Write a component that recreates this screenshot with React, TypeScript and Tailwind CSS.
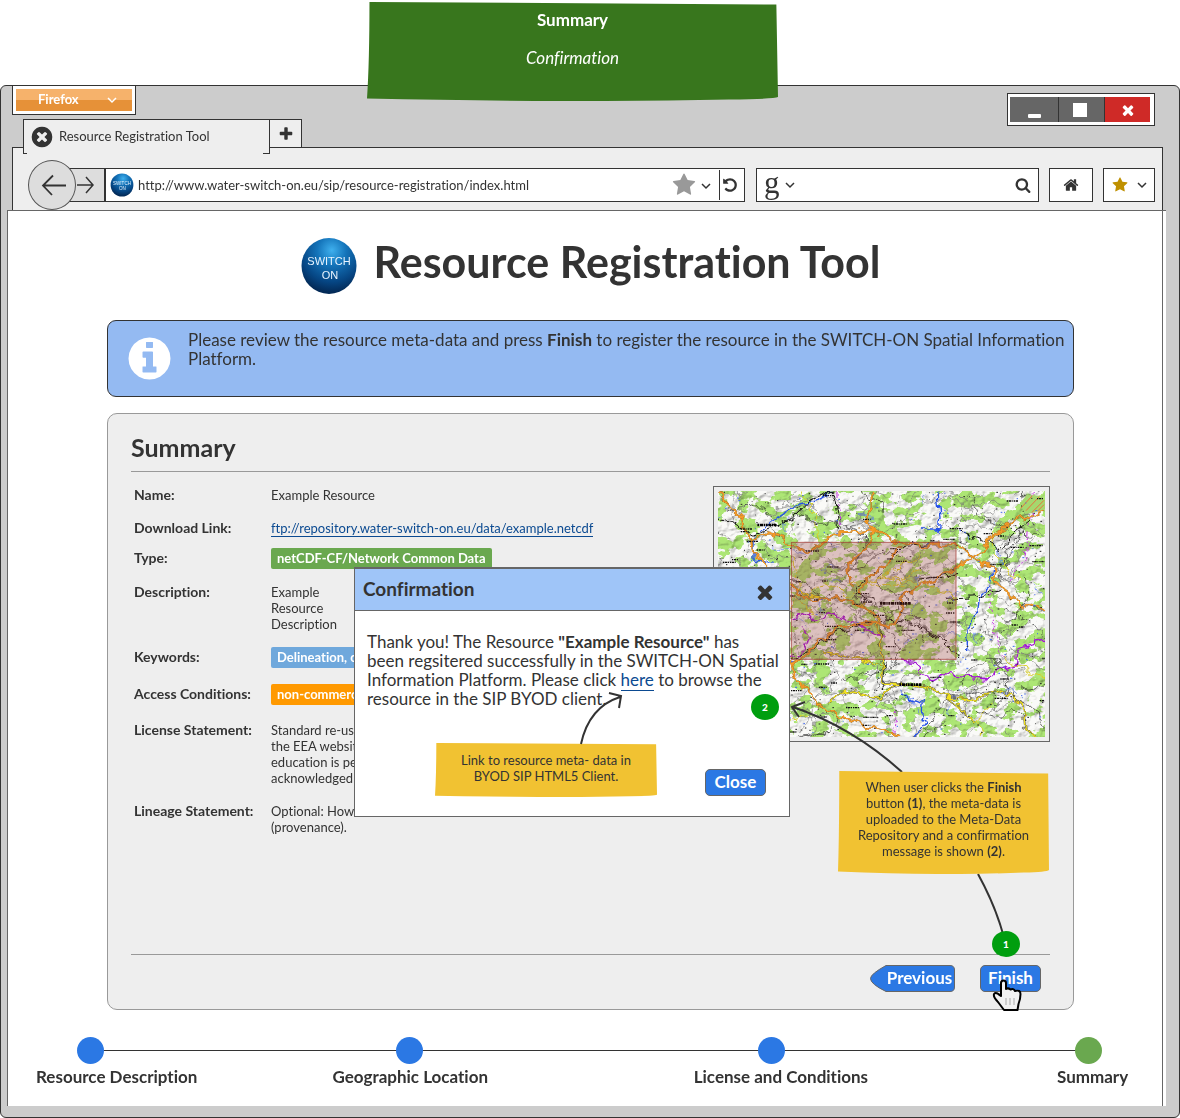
import React from "react";

const ICONS = {
  times:
    "M1490 1322q0 40-28 68l-136 136q-28 28-68 28t-68-28l-294-294-294 294q-28 28-68 28t-68-28l-136-136q-28-28-28-68t28-68l294-294-294-294q-28-28-28-68t28-68l136-136q28-28 68-28t68 28l294 294 294-294q28-28 68-28t68 28l136 136q28 28 28 68t-28 68l-294 294 294 294q28 28 28 68z",
  plus: "M1600 736v192q0 40-28 68t-68 28h-416v416q0 40-28 68t-68 28h-192q-40 0-68-28t-28-68v-416h-416q-40 0-68-28t-28-68v-192q0-40 28-68t68-28h416v-416q0-40 28-68t68-28h192q40 0 68 28t28 68v416h416q40 0 68 28t28 68z",
  star: "M1728 647q0 22-26 48l-363 354 86 500q1 7 1 20 0 21-10.500 35.500t-30.500 14.500q-19 0-40-12l-449-236-449 236q-22 12-40 12-21 0-31.500-14.500t-10.500-35.500q0-6 2-20l86-500-364-354q-25-27-25-48 0-37 56-46l502-73 225-455q19-41 49-41t49 41l225 455 502 73q56 9 56 46z",
  search:
    "M1216 832q0-185-131.500-316.500t-316.500-131.500-316.500 131.500-131.500 316.500 131.500 316.500 316.500 131.500 316.500-131.500 131.500-316.500zm512 832q0 52-38 90t-90 38q-54 0-90-38l-343-342q-179 124-399 124-143 0-273.500-55.500t-225-150-150-225-55.500-273.500 55.500-273.500 150-225 225-150 273.500-55.500 273.500 55.500 225 150 150 225 55.500 273.500q0 220-124 399l343 343q37 37 37 90z",
  home: "M1472 992v480q0 26-19 45t-45 19h-384v-384h-256v384h-384q-26 0-45-19t-19-45v-480q0-1 .5-3t.5-3l575-474 575 474q1 2 1 6zm223-69l-62 74q-8 9-21 11h-3q-13 0-21-7l-692-577-692 577q-12 8-24 7-13-2-21-11l-62-74q-8-10-7-23.500t11-21.500l719-599q32-26 76-26t76 26l244 204v-195q0-14 9-23t23-9h192q14 0 23 9t9 23v408l219 182q10 8 11 21.500t-7 23.500z",
  undo: "M1664 896q0 156-61 298t-164 245-245 164-298 61q-172 0-327-72.500t-264-204.500q-7-10-6.500-22.500t8.500-20.500l137-138q10-9 25-9 16 2 23 12 73 95 179 147t225 52q104 0 198.500-40.500t163.500-109.500 109.500-163.500 40.500-198.500-40.500-198.500-109.500-163.500-163.500-109.500-198.500-40.500q-98 0-188 35.500t-160 101.500l137 138q31 30 14 69-17 40-59 40h-448q-26 0-45-19t-19-45v-448q0-42 40-59 39-17 69 14l130 129q107-101 244.500-156.500t284.500-55.500q156 0 298 61t245 164 164 245 61 298z",
  info: "M1152 1376v-160q0-14-9-23t-23-9h-96v-512q0-14-9-23t-23-9h-320q-14 0-23 9t-9 23v160q0 14 9 23t23 9h96v320h-96q-14 0-23 9t-9 23v160q0 14 9 23t23 9h448q14 0 23-9t9-23zm-128-896v-160q0-14-9-23t-23-9h-192q-14 0-23 9t-9 23v160q0 14 9 23t23 9h192q14 0 23-9t9-23zm640 416q0 209-103 385.500t-279.500 279.500-385.500 103-385.500-103-279.500-279.500-103-385.500 103-385.500 279.500-279.500 385.500-103 385.500 103 279.500 279.500 103 385.500z",
  timesCircle:
    "M1277 1122q0-26-19-45l-181-181 181-181q19-19 19-45 0-27-19-46l-90-90q-19-19-46-19-26 0-45 19l-181 181-181-181q-19-19-45-19-27 0-46 19l-90 90q-19 19-19 46 0 26 19 45l181 181-181 181q-19 19-19 45 0 27 19 46l90 90q19 19 46 19 26 0 45-19l181-181 181 181q19 19 45 19 27 0 46-19l90-90q19-19 19-46zm387-226q0 209-103 385.500t-279.500 279.500-385.500 103-385.500-103-279.500-279.500-103-385.500 103-385.500 279.500-279.500 385.500-103 385.500 103 279.500 279.500 103 385.500z",
};

function Icon({ name, className }: { name: keyof typeof ICONS; className: string }) {
  return (
    <svg viewBox="0 0 1792 1792" fill="currentColor" className={"shrink-0 " + className} aria-hidden="true">
      <path d={ICONS[name]} />
    </svg>
  );
}

function Chevron({ className }: { className: string }) {
  return (
    <svg viewBox="0 0 10 8" className={"h-2 w-[10px] shrink-0 " + className} fill="none" stroke="currentColor" aria-hidden="true">
      <path d="M1 2l4 4 4-4" strokeWidth="1.5" />
    </svg>
  );
}

function Logo({ id, className }: { id: string; className: string }) {
  return (
    <svg viewBox="0 0 56 58" className={"shrink-0 " + className} role="img" aria-label="SWITCH ON">
      <defs>
        <radialGradient id={id} cx="0.55" cy="0.22" r="0.75">
          <stop offset="0" stopColor="#3fb0ee" />
          <stop offset="0.35" stopColor="#1474ba" />
          <stop offset="0.75" stopColor="#064684" />
          <stop offset="1" stopColor="#032a57" />
        </radialGradient>
      </defs>
      <ellipse cx="28" cy="29" rx="27.5" ry="28" fill={`url(#${id})`} />
      <g fill="#e8f4ff" fontFamily="'Liberation Sans', sans-serif" fontSize="11" textAnchor="middle">
        <text x="28" y="28">SWITCH</text>
        <text x="29" y="42">ON</text>
      </g>
    </svg>
  );
}

/* A slightly crooked paper note; the outline stretches with its text. */
function Note({ className, fill, children }: { className: string; fill: string; children: React.ReactNode }) {
  return (
    <div className={"absolute " + className}>
      <svg viewBox="0 0 100 100" preserveAspectRatio="none" className="absolute inset-0 h-full w-full" aria-hidden="true">
        <path d="M.6 0L99.600 2.500L100 96Q99 98 88 98.500Q50 102 0 97.500Q.6 60 .6 0Z" fill={fill} />
      </svg>
      <div className="relative">{children}</div>
    </div>
  );
}

function Badge({ className, children }: { className: string; children: React.ReactNode }) {
  return (
    <span
      className={
        "absolute flex h-[26px] w-7 items-center justify-center rounded-[50%] bg-[#009e0f] text-[10px] font-black text-white " +
        className
      }
    >
      {children}
    </span>
  );
}

function makeRandom(seed: number) {
  let s = seed;
  return () => {
    s = (s * 1664525 + 1013904223) % 4294967296;
    return s / 4294967296;
  };
}

function lanes(seed: number, count: number, steps: number, size: number) {
  const r = makeRandom(seed);
  const out: string[] = [];
  for (let i = 0; i < count; i++) {
    let x = 54 + r() * 981;
    let y = 33 + r() * 738;
    let a = r() * 6.28;
    let d = `M${x.toFixed(0)} ${y.toFixed(0)}`;
    for (let k = 0; k < steps; k++) {
      a += (r() - 0.5) * 1.2;
      x += Math.cos(a) * size;
      y += Math.sin(a) * size;
      d += `L${x.toFixed(0)} ${y.toFixed(0)}`;
    }
    out.push(d);
  }
  return out.join("");
}

function ticks(seed: number, count: number, len: number) {
  const r = makeRandom(seed);
  let d = "";
  for (let i = 0; i < count; i++) {
    d += `M${(54 + r() * 975).toFixed(0)} ${(36 + r() * 732).toFixed(0)}h${(len * (0.4 + r())).toFixed(0)}`;
  }
  return d;
}

const MINOR = lanes(7, 170, 9, 13);
const DARK = lanes(31, 34, 11, 15);
const YELLOW = lanes(57, 16, 12, 16);
const STREAMS = lanes(99, 30, 5, 9);
const PLACES = ticks(12, 80, 30);
const SPECKS = ticks(44, 420, 4);
const BLUE_SPECKS = ticks(71, 160, 5);

const ORANGE_ROADS = [
  "M54 36L75 60L100 85L120 105L128 140L160 180L165 220L200 260",
  "M160 178L200 160L240 168L275 195L325 213L350 200L400 158L450 155L520 148L580 180L680 200L770 190L815 232L880 265L890 315L950 360L960 390L985 375L1035 385",
  "M515 33L515 85L500 125L520 148L505 200L450 245L455 320",
  "M1035 88L980 112L935 125L870 175L850 210L780 255L725 285L700 305L650 320L610 350L600 400L570 438L500 425L470 430",
  "M275 315L300 345L340 360L400 352L480 375L525 400L540 430",
  "M540 430L420 442L350 490L320 525L275 550L285 595L330 635L360 680L430 712L500 740L600 765",
  "M480 340L510 290L570 240L600 200",
];
const YELLOW_ROADS = [
  "M270 315L320 345L400 355L490 375L530 420L540 480L550 560L545 610L600 610L690 625L750 655L830 660L900 630L970 670L975 740L1010 771",
  "M580 610L545 660L440 630L380 665",
  "M370 515L450 530L550 560",
  "M830 660L740 655L800 700L830 730",
];
const RAIL = [
  "M54 120L100 130L160 165L200 150L275 120L330 60L400 36",
  "M400 40L412 100L415 150",
  "M780 150L850 180L905 212L940 160L990 120",
  "M490 365L470 320L500 300L560 250L610 200L700 190",
  "M545 420L540 500L555 560L550 640",
  "M735 355L830 350L900 330M660 300L780 280",
  "M275 540L350 500L400 460L480 440",
  "M560 420L640 430L730 480L780 540",
];
const RIVERS = [
  "M175 155L230 115L290 75L350 65L395 36",
  "M710 36L720 110L715 150L660 150",
  "M880 270L870 320L835 350L830 400L805 450L800 510",
  "M165 170L165 240L215 250",
  "M600 630L630 660L670 670L665 710L680 725L645 771",
];
const BORDERS = [
  "M275 420L330 400L350 425L400 400L470 430L520 460L545 475",
  "M600 540L640 545L660 580L700 600L730 580L860 600L885 575L950 550L955 500L1035 480",
  "M275 530L310 520L325 470L300 440",
];

function RegionMap() {
  return (
    <svg viewBox="54 33 981 738" preserveAspectRatio="none" className="block h-[246px] w-full" role="img" aria-label="Map of the resource location">
      <defs>
        <filter id="relief" x="0" y="0" width="1" height="1" colorInterpolationFilters="sRGB">
          <feTurbulence type="fractalNoise" baseFrequency="0.03 0.04" numOctaves="3" seed="4" />
          <feColorMatrix type="matrix" values="0 0 0 0 0  0 0 0 0 0  0 0 0 0 0  1 0 0 0 0" />
          <feDiffuseLighting surfaceScale="5" lightingColor="#ffffff" diffuseConstant="1.120">
            <feDistantLight azimuth="225" elevation="62" />
          </feDiffuseLighting>
        </filter>
        <filter id="woods" x="0" y="0" width="1" height="1" colorInterpolationFilters="sRGB">
          <feTurbulence type="fractalNoise" baseFrequency="0.018 0.024" numOctaves="4" seed="19" result="n" />
          <feColorMatrix in="n" type="matrix" values="0 0 0 0 0.68  0 0 0 0 0.9  0 0 0 0 0.46  30 0 0 0 -15.400" />
        </filter>
        <filter id="wiggle" x="0" y="0" width="1" height="1" colorInterpolationFilters="sRGB">
          <feTurbulence type="fractalNoise" baseFrequency="0.035" numOctaves="2" seed="8" result="w" />
          <feDisplacementMap in="SourceGraphic" in2="w" scale="34" xChannelSelector="R" yChannelSelector="G" />
        </filter>
      </defs>
      <rect x="54" y="33" width="981" height="738" fill="#fafaf8" />
      <rect x="54" y="33" width="981" height="738" filter="url(#woods)" />
      <rect x="54" y="33" width="981" height="738" filter="url(#relief)" className="mix-blend-multiply" />
      <g fill="none" filter="url(#wiggle)">
        <path d={MINOR} stroke="#777" strokeWidth="2" />
        <path d={YELLOW} stroke="#d9cf28" strokeWidth="3" />
        <path d={STREAMS} stroke="#5c7df0" strokeWidth="2" />
        <path d={DARK} stroke="#222" strokeWidth="2" />
        <path d={BORDERS.join("")} stroke="#a414d8" strokeWidth="4" />
        <path d="M870 330L880 400L880 450L910 530M1000 36L985 150L975 230L930 300M590 690L580 771M410 36L425 140" stroke="#c43be0" strokeWidth="3" strokeDasharray="10 5" />
        <path d={RIVERS.join("")} stroke="#2450e8" strokeWidth="4" />
        <path d={RAIL.join("")} stroke="#111" strokeWidth="3" />
        <path d={YELLOW_ROADS.join("")} stroke="#444" strokeWidth="6" />
        <path d={YELLOW_ROADS.join("")} stroke="#f0e020" strokeWidth="4" />
        <path d={ORANGE_ROADS.join("")} stroke="#7a5a20" strokeWidth="6" />
        <path d={ORANGE_ROADS.join("")} stroke="#f59a28" strokeWidth="5" />
      </g>
      <path d="M960 70l20-25 35 2 20 15v25l-30 10-30 5z" fill="#a5d86e" />
      <path d="M962 85l35-38M978 92l40-42M996 97l36-36M1012 94l20-20" stroke="#e8743c" strokeWidth="3" />
      <path d={BLUE_SPECKS} stroke="#4068f0" strokeWidth="3" />
      <path d={SPECKS} stroke="#222" strokeWidth="3" />
      <path d={PLACES} stroke="#111" strokeWidth="4" strokeDasharray="4 2 7 2 3 3" />
      <path d="M540 370h92M598 614h66M172 135h58" stroke="#000" strokeWidth="8" strokeDasharray="6 2 9 2 4 2" />
      <rect x="274" y="187" width="494" height="351" fill="#98403c" fillOpacity="0.3" stroke="#a0302c" strokeOpacity="0.7" strokeWidth="3" />
    </svg>
  );
}

const VALUE_BADGE = "inline-block rounded-xs px-[6px] py-[2px] font-bold text-white leading-[17px] whitespace-nowrap";

const ROWS: { label: string; gap: string; value: React.ReactNode }[] = [
  { label: "Name:", gap: "pt-0", value: "Example Resource" },
  {
    label: "Download Link:",
    gap: "pt-[17px]",
    value: (
      <a href="#download" className="border-b border-[#0b4a91] text-[#0b4a91]">
        ftp://repository.water-switch-on.eu/data/example.netcdf
      </a>
    ),
  },
  { label: "Type:", gap: "pt-3", value: <span className={VALUE_BADGE + " bg-[#6aa84f]"}>netCDF-CF/Network Common Data</span> },
  { label: "Description:", gap: "pt-[15px]", value: <span className="block w-[76px]">Example Resource Description</span> },
  { label: "Keywords:", gap: "pt-[15px]", value: <span className={VALUE_BADGE + " bg-[#6fa8dc]"}>Delineation, catchment</span> },
  { label: "Access Conditions:", gap: "pt-4", value: <span className={VALUE_BADGE + " bg-[#ff9900]"}>non-commercial use</span> },
  {
    label: "License Statement:",
    gap: "pt-[17px]",
    value: (
      <>
        Standard re-use policy
        <br />
        the EEA website for
        <br />
        education is permitted
        <br />
        acknowledged
      </>
    ),
  },
  {
    label: "Lineage Statement:",
    gap: "pt-[17px]",
    value: (
      <>
        Optional: How
        <br />
        (provenance).
      </>
    ),
  },
];

const STEPS = [
  { label: "Resource Description", dot: "ml-[41px] bg-[#2b78e4]" },
  { label: "Geographic Location", dot: "ml-[64px] bg-[#2b78e4]" },
  { label: "License and Conditions", dot: "ml-[64px] bg-[#2b78e4]" },
  { label: "Summary", dot: "ml-[18px] bg-[#6aa84f]" },
];

const BLUE_BUTTON =
  "h-[27px] rounded-[5px] border border-[#666] bg-[#2b78e4] pb-[3px] text-[17px] leading-none font-bold text-white";

function BrowserChrome() {
  return (
    <>
      <div className="flex h-[33px] items-start justify-between pr-6 pl-[11px]">
        <div className="-mt-px border border-[#333] bg-white p-[3px]">
          <button
            type="button"
            className="flex h-[22px] w-[116px] items-center justify-between bg-linear-to-b from-[#f6b26b] from-50% to-[#e69138] to-50% pr-[15px] pl-[22px] text-[13px] font-bold text-white"
          >
            Firefox
            <Chevron className="text-white" />
          </button>
        </div>
        <div className="mt-[7px] flex border border-[#333] bg-white py-[3px] pr-1 pl-[2px] text-white">
          <button type="button" aria-label="Minimize" className="flex h-[25px] w-[49px] items-end justify-center border-r border-[#333] bg-[#666] pb-1">
            <span className="h-1 w-[13px] rounded-[1px] bg-white" />
          </button>
          <button type="button" aria-label="Maximize" className="flex h-[25px] w-[46px] items-center justify-center border-r border-[#333] bg-[#666] pr-1">
            <span className="h-[14px] w-[14px] bg-white" />
          </button>
          <button type="button" aria-label="Close window" className="flex h-[25px] w-[45px] items-center justify-center bg-[#cf2a27]">
            <Icon name="times" className="h-4 w-4" />
          </button>
        </div>
      </div>

      <div className="flex h-7 items-start pl-[22px]">
        <div className="relative z-10 flex h-[35px] w-[247px] items-center gap-[5px] border-x border-t border-[#333] bg-[#eee] pl-[6px] text-[13px]">
          <Icon name="timesCircle" className="h-6 w-6" />
          Resource Registration Tool
          <span className="absolute bottom-0 left-0 h-px w-[3px] bg-[#333]" />
          <span className="absolute right-0 bottom-0 h-px w-[6px] bg-[#333]" />
        </div>
        <button type="button" aria-label="New tab" className="flex h-7 w-8 items-center justify-center border-t border-r border-[#333] bg-[#eee]">
          <Icon name="plus" className="h-4 w-4" />
        </button>
      </div>

      <div className="mr-4 ml-[11px] flex h-[63px] items-start border-x border-t border-[#333] bg-[#eee] pt-3 pr-[7px] pl-[15px]">
        <div className="flex min-w-0 flex-1 items-center">
          <button
            type="button"
            aria-label="Back"
            className="relative z-10 flex h-[50px] w-12 shrink-0 items-center justify-center rounded-[50%] border border-[#555] bg-[#ddd] pl-1"
          >
            <svg viewBox="0 0 26 22" className="h-[22px] w-[26px]" fill="none" stroke="#333" strokeWidth="1.800" aria-hidden="true">
              <path d="M25 11.500H2M12 1.500L2 11.500L11 21" />
            </svg>
          </button>
          <button
            type="button"
            aria-label="Forward"
            className="-ml-6 flex h-[34px] w-[53px] shrink-0 items-center justify-end border border-[#333] bg-[#ddd] pr-[10px]"
          >
            <svg viewBox="0 0 18 18" className="h-[18px] w-[18px]" fill="none" stroke="#333" strokeWidth="1.500" aria-hidden="true">
              <path d="M1 9H17M10 1L17 9L10 17" />
            </svg>
          </button>
          <div className="flex h-[34px] min-w-0 flex-1 items-center border border-[#333] bg-white pl-1">
            <Logo id="logoSmall" className="h-6 w-6" />
            <input
              aria-label="Address"
              defaultValue="http://www.water-switch-on.eu/sip/resource-registration/index.html"
              className="h-7 min-w-0 flex-1 bg-transparent pl-1 text-[13px] outline-none"
            />
            <button type="button" aria-label="Bookmark" className="flex items-center gap-[5px] text-[#999]">
              <Icon name="star" className="h-6 w-6" />
              <Chevron className="mt-[2px] text-[#333]" />
            </button>
            <button type="button" aria-label="Reload" className="ml-2 flex h-[30px] w-[25px] items-center justify-center border-l border-[#333] pr-1">
              <Icon name="undo" className="h-4 w-4" />
            </button>
          </div>
        </div>
        <div className="ml-[11px] flex h-[50px] items-center gap-[10px]">
          <div className="flex h-[34px] w-[283px] items-center border border-[#333] bg-white px-[7px]">
            <span className="pb-1 font-['Liberation_Serif',serif] text-[31px] leading-7">g</span>
            <Chevron className="ml-[5px]" />
            <input aria-label="Search" className="h-7 min-w-0 flex-1 bg-transparent px-2 text-[13px] outline-none" />
            <Icon name="search" className="h-4 w-4" />
          </div>
          <button type="button" aria-label="Home" className="flex h-[34px] w-11 items-center justify-center border border-[#333] bg-white">
            <Icon name="home" className="h-4 w-4" />
          </button>
          <button type="button" aria-label="Bookmarks" className="flex h-[34px] w-[52px] items-center justify-center gap-[9px] border border-[#333] bg-white text-[#bf9000]">
            <Icon name="star" className="h-4 w-4" />
            <Chevron className="text-[#333]" />
          </button>
        </div>
      </div>
    </>
  );
}

function ConfirmationDialog() {
  return (
    <div role="dialog" aria-labelledby="confirm-title" className="absolute top-[153px] left-[246px] h-[250px] w-[436px] border border-t-2 border-[#666] bg-white">
      <div className="flex h-[42px] items-center justify-between border-b border-[#666] bg-[#9fc5f8] pr-[13px] pl-2">
        <h3 id="confirm-title" className="pb-[2px] text-[19px] leading-6 font-bold">Confirmation</h3>
        <button type="button" aria-label="Close dialog" className="pt-1">
          <Icon name="times" className="h-[22px] w-[22px]" />
        </button>
      </div>
      <p className="px-3 pt-[21px] text-[17px] leading-[19px] whitespace-nowrap">
        Thank you! The Resource <b>"Example Resource"</b> has
        <br />
        been regsitered successfully in the SWITCH-ON Spatial
        <br />
        Information Platform. Please click{" "}
        <a href="#resource" className="border-b border-[#0b4a91] text-[#0b4a91]">here</a> to browse the
        <br />
        resource in the SIP BYOD client.
      </p>
      <Badge className="top-[125px] right-[10px]">2</Badge>
      <Note className="top-[174px] left-[80px] h-[54px] w-[222px] pt-[9px] text-center text-[13px] leading-4" fill="#f1c232">
        Link to resource meta- data in
        <br />
        BYOD SIP HTML5 Client.
      </Note>
      <button type="button" className={BLUE_BUTTON + " absolute right-[23px] bottom-5 w-[61px]"}>Close</button>
    </div>
  );
}

export default function App() {
  return (
    <div className="relative flex min-h-screen flex-col bg-white pt-[85px] font-[Lato,sans-serif] text-[#333] [font-variant-ligatures:none]">
      <div className="flex flex-1 flex-col rounded-md border border-[#333] bg-[#ccc] pb-[11px]">
        <BrowserChrome />
        <main className="mr-[13px] ml-[6px] flex flex-1 flex-col border-t border-l border-[#666] bg-white pr-[3px]">
          <div className="flex flex-1 flex-col border-r border-[#666] pr-[88px] pl-[99px]">
            <header className="flex items-start justify-center gap-[17px] pt-[26px]">
              <Logo id="logoLarge" className="h-[58px] w-14" />
              <h1 className="text-[43px] leading-[50px] font-bold whitespace-nowrap">Resource Registration Tool</h1>
            </header>

            <section className="mt-[25px] flex min-h-[77px] gap-[14px] rounded-[9px] border border-[#333] bg-[#94baf2] pr-1 pl-[17px]">
              <Icon name="info" className="mt-[13px] h-[49px] w-[49px] text-white" />
              <p className="pt-[9px] text-[17px] leading-[19px]">
                Please review the resource meta-data and press <b>Finish</b> to register the resource in the SWITCH-ON Spatial Information Platform.
              </p>
            </section>

            <section className="relative mt-4 flex flex-col rounded-[10px] border border-[#999] bg-[#eee] px-[23px] pb-[17px]">
              <h2 className="border-b border-[#999] pt-[17px] pb-2 text-[25px] leading-8 font-bold">Summary</h2>
              <div className="flex min-h-[482px] items-start justify-between">
                <dl className="pt-[15px] pl-[3px] text-[13px] leading-4">
                  {ROWS.map((row) => (
                    <div key={row.label} className={"flex items-baseline " + row.gap}>
                      <dt className="w-[137px] text-sm leading-4 font-bold">{row.label}</dt>
                      <dd>{row.value}</dd>
                    </div>
                  ))}
                </dl>
                <div className="mt-[14px] w-[337px] shrink-0 border border-[#666] p-1">
                  <RegionMap />
                </div>
              </div>
              <div className="flex justify-end gap-[25px] border-t border-[#999] pt-[10px] pr-[9px]">
                <button type="button" className="relative h-[27px] w-[85px] pb-[3px] pl-[14px] text-[17px] leading-none font-bold text-white">
                  <svg viewBox="0 0 85 27" className="absolute inset-0 h-[27px] w-[85px]" aria-hidden="true">
                    <path d="M16 .5H80Q84.500 .5 84.500 5V22Q84.500 26.500 80 26.500H16Q.5 19 .5 13.500Q.5 9 16 .5Z" fill="#2b78e4" stroke="#666" />
                  </svg>
                  <span className="relative">Previous</span>
                </button>
                <button type="button" className={BLUE_BUTTON + " w-[61px]"}>Finish</button>
              </div>

              <ConfirmationDialog />

              <svg viewBox="0 0 967 597" className="pointer-events-none absolute -top-px -left-px h-[597px] w-[967px]" fill="none" stroke="#333" strokeWidth="2" aria-hidden="true">
                <path d="M474 331Q482 294 513 284M502 280L514 283L512 295" />
                <path d="M795 359Q745 314 686 294M698 289L685 294L692 304" />
                <path d="M871 461Q888 492 896 521" />
              </svg>
              <Note className="top-[357px] left-[730px] h-[103px] w-[211px] pt-2 text-center text-[13px] leading-4" fill="#f1c232">
                When user clicks the <b>Finish</b>
                <br />
                button <b>(1)</b>, the meta-data is
                <br />
                uploaded to the Meta-Data
                <br />
                Repository and a confirmation
                <br />
                message is shown <b>(2)</b>.
              </Note>
              <Badge className="right-[53px] bottom-[52px]">1</Badge>
              <svg viewBox="0 0 30 33" className="pointer-events-none absolute right-[51px] -bottom-[3px] h-[33px] w-[30px]" aria-hidden="true">
                <path
                  d="M9 17V4Q9 1.500 11.500 1.500Q14 1.500 14 4V10Q16 8.500 18.500 10.500Q21.500 9 23 12Q28.500 10.500 28.500 15Q28.500 20 26.500 25L25.500 31H12L6 23Q1 18 2 15Q4 12.500 9 17Z"
                  fill="#f2f2f2"
                  stroke="#000"
                  strokeWidth="2"
                  strokeLinejoin="round"
                />
                <path d="M14 19v7M18 19v7M22 19v7" stroke="#aaa" />
              </svg>
            </section>
          </div>

          <div className="border-r border-[#666] pr-[34px] pb-[18px] pl-7">
            <ol className="relative grid grid-cols-[297fr_362fr_364fr_71px] pt-[27px] text-[17px] leading-5 font-bold">
              <li aria-hidden="true" className="absolute top-10 right-[39px] left-[55px] h-px bg-[#333]" />
              {STEPS.map((step) => (
                <li key={step.label} className="relative whitespace-nowrap">
                  <span className={"block h-[27px] w-[27px] rounded-full " + step.dot} />
                  <span className="block pt-[3px] pb-px">{step.label}</span>
                </li>
              ))}
            </ol>
          </div>
        </main>
      </div>

      <Note className="top-[2px] left-1/2 h-[99px] w-[411px] -translate-x-[223px] pt-2 text-center text-[17px] leading-[19px] text-white" fill="#38761d">
        <b>Summary</b>
        <br />
        <br />
        <i>Confirmation</i>
      </Note>
    </div>
  );
}
